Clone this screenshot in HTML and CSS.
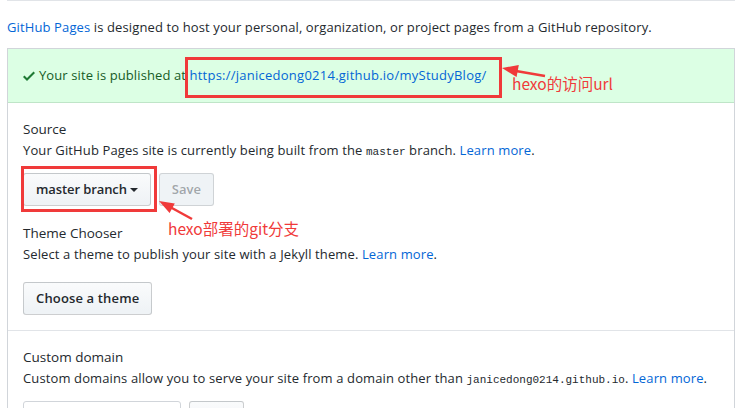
FILE: index.html
```html
<!DOCTYPE html>
<html lang="en">
<head>
<meta charset="utf-8">
<title>GitHub Pages</title>
<link rel="stylesheet" href="styles.css">
</head>
<body>
<div class="page">
  <div class="rule"></div>
  <p class="intro"><a href="#">GitHub Pages</a> is designed to host your personal, organization, or project pages from a GitHub repository.</p>
  <div class="box">
    <div class="flash">
      <svg class="check" viewBox="0 0 12 16" width="12" height="16"><path d="M12 5l-8 8-4-4 1.5-1.5L4 10l6.5-6.5L12 5z"/></svg>
      <span>Your site is published at <a class="url" href="#">https://janicedong0214.github.io/myStudyBlog/</a></span>
    </div>
    <div class="section">
      <div class="label">Source</div>
      <div class="note">Your GitHub Pages site is currently being built from the <code>master</code> branch. <a href="#">Learn more</a>.</div>
      <div class="controls tight">
        <button class="btn narrow">master branch <span class="caret"></span></button>
        <button class="btn disabled">Save</button>
      </div>
      <div class="label gap">Theme Chooser</div>
      <div class="note">Select a theme to publish your site with a Jekyll theme. <a href="#">Learn more</a>.</div>
      <div class="controls loose">
        <button class="btn wide">Choose a theme</button>
      </div>
    </div>
    <div class="section last">
      <div class="label">Custom domain</div>
      <div class="note">Custom domains allow you to serve your site from a domain other than <code>janicedong0214.github.io</code>. <a href="#">Learn more</a>.</div>
      <div class="controls tight">
        <input class="field" type="text">
        <button class="btn small">Save</button>
      </div>
    </div>
  </div>
</div>

<svg class="marks" width="737" height="408" viewBox="0 0 737 408">
  <rect x="186.5" y="58.5" width="314" height="38" />
  <line x1="545" y1="76" x2="516" y2="71" />
  <polygon points="502,68 516.6,76.9 518.8,65.1" />
  <rect x="22.5" y="167.5" width="133" height="43" />
  <line x1="192" y1="219" x2="171" y2="207.5" />
  <polygon points="159,201 169.6,213 174.8,203.4" />
</svg>
<div class="note-red one">hexo的访问url</div>
<div class="note-red two">hexo部署的git分支</div>
</body>
</html>
```
FILE: styles.css
```css
html, body { margin: 0; padding: 0; background: #fff; }
body {
  font-family: "Open Sans", "Noto Sans", sans-serif;
  font-size: 13px;
  line-height: 21px;
  color: #24292e;
  width: 737px;
  height: 408px;
  overflow: hidden;
  position: relative;
}
a { color: #0366d6; text-decoration: none; }
.page { margin-left: 7px; width: 728px; }
.rule { border-top: 1px solid #e1e4e8; }
.intro { margin: 16px 0 10px; letter-spacing: 0.12px; }
.box { border: 1px solid #d1d5da; border-bottom: 0; }
.flash {
  background: #dcffe4;
  border-bottom: 1px solid #bfe5c8;
  color: #165c26;
  padding: 16px 15px;
  display: flex;
  align-items: center;
  gap: 4px;
  letter-spacing: 0.1px;
}
.url { letter-spacing: 0.25px; }
.check { fill: #1f7a34; }
.section { padding: 16px 15px 15px; border-bottom: 1px solid #e1e4e8; }
.section.last { border-bottom: 0; padding-bottom: 0; }
.label { font-size: 13.5px; }
.label.gap { margin-top: 17px; }
.note { letter-spacing: 0.12px; }
code { font-family: "Liberation Mono", "DejaVu Sans Mono", monospace; font-size: 11px; letter-spacing: 0; }
.controls { display: flex; gap: 8px; align-items: flex-start; }
.controls.tight { margin-top: 10px; }
.controls.loose { margin-top: 17px; }
.btn {
  font-family: inherit;
  font-size: 13px;
  font-weight: 600;
  line-height: 19px;
  color: #24292e;
  padding: 6px 12px;
  border: 1px solid rgba(27,31,35,0.2);
  border-radius: 3px;
  background: linear-gradient(#fafbfc, #eff3f6 90%);
  display: inline-flex;
  align-items: center;
  gap: 4px;
}
.btn.narrow { letter-spacing: -0.1px; gap: 3px; }
.btn.wide { letter-spacing: 0.15px; }
.btn.disabled { color: rgba(36,41,46,0.4); background: #eff3f6; border-color: rgba(27,31,35,0.15); }
.btn.small { width: 55px; height: 33px; }
.caret {
  display: inline-block;
  width: 0; height: 0;
  border-top: 4px solid #24292e;
  border-left: 4px solid transparent;
  border-right: 4px solid transparent;
}
.field {
  width: 158px;
  height: 33px;
  box-sizing: border-box;
  border: 1px solid #d1d5da;
  border-radius: 3px;
  margin: 0;
}
.marks { position: absolute; left: 0; top: 0; pointer-events: none; }
.marks rect { fill: none; stroke: #f03a3a; stroke-width: 3; }
.marks line { stroke: #f03a3a; stroke-width: 2.5; }
.marks polygon { fill: #f03a3a; }
.note-red {
  position: absolute;
  font-family: "Noto Sans CJK SC", sans-serif;
  font-size: 15.5px;
  line-height: 20px;
  color: #f03a3a;
  white-space: nowrap;
}
.note-red.one { left: 512px; top: 73px; }
.note-red.two { left: 168px; top: 218px; }
```
